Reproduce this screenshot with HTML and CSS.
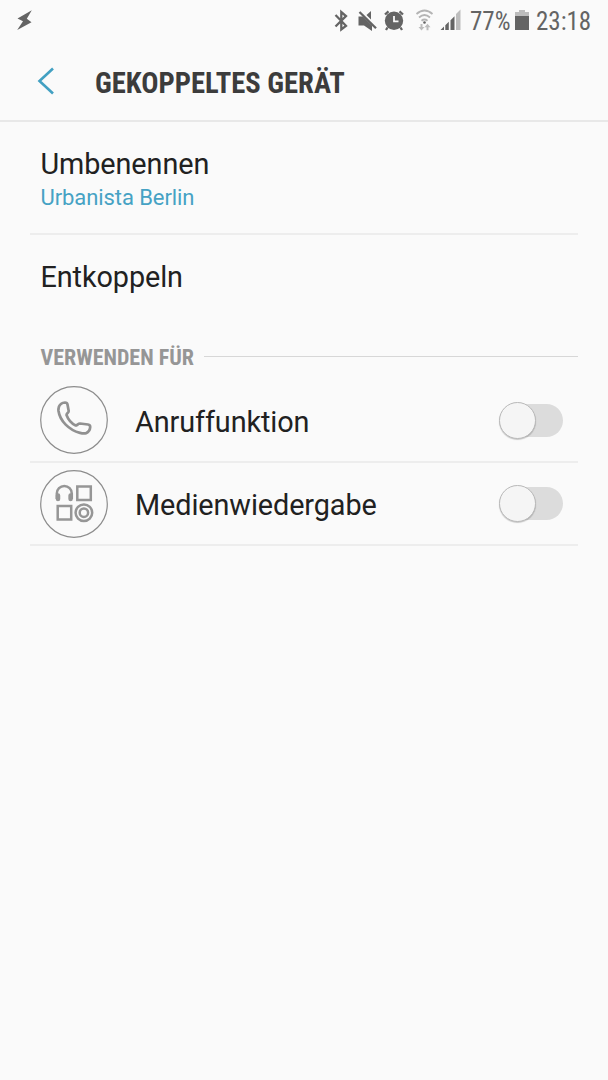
FILE: index.html
```html
<!DOCTYPE html>
<html lang="de">
<head>
    <meta charset="UTF-8">
    <meta name="viewport" content="width=device-width, initial-scale=1.0">
    <title>Gekoppeltes Gerät</title>
    <link rel="stylesheet" href="styles.css">
</head>
<body>
    <div class="status-bar">
        <svg class="icon-flash" width="18" height="20" viewBox="0 0 18 20">
            <path d="M15.800 .2 1.500 8.500l5.500 2.800L1.200 20l14.300-7.700-4.700-3.500z"/>
        </svg>
        <div class="status-icons">
            <svg width="135" height="42" viewBox="-.5 -.5 135 42">
                <!-- bluetooth -->
                <path class="line" d="M3 14.500 13.500 25.300 8.800 29V11.500L13.500 15.500 3 26"/>
                <!-- mute -->
                <path d="M26 16h4.500l9 9v5.500L31.500 25H26zM34 14.500 38.500 10.500V19z"/>
                <path class="line" d="M27 11.500 43.500 27.800"/>
                <!-- alarm -->
                <circle cx="61.500" cy="20.300" r="9.200"/>
                <path class="line" d="M52.500 14 56 10.800M67 10.800l3.500 3.200M55 27l-1.500 2.500M68 27l1.500 2.500"/>
                <path class="hands" d="M61.500 15.500v5.300H66"/>
                <!-- wifi -->
                <path class="wifi" d="M84 13.500q8-7 16 0M86.500 17q5.500-5 11 0M89 20.200q3-2.500 6 0"/>
                <circle cx="92" cy="22" r="1.300"/>
                <path class="pale" d="M88 23.500v3h-2l3 3.500 3-3.500h-2v-3zM94 29.800v-3h-2l3-3.600 3 3.600h-2v3z"/>
                <!-- signal -->
                <path d="M108 29.500l3.500-3.500v3.500zM112.800 24.700l3.500-3.500v8.300h-3.500zM118 19.800l4-4v13.700h-4z"/>
                <path class="pale" d="M123.500 13.500l4.500-4.500v20.500h-4.500z"/>
            </svg>
            <span class="battery-level">77%</span>
            <svg class="icon-battery" width="14" height="20" viewBox="0 0 14 20">
                <path class="pale" d="M0 2h4V0h6v2h4v5H0z"/>
                <path d="M0 6h14v14H0z"/>
            </svg>
            <span class="clock">23:18</span>
        </div>
    </div>

    <header class="title-bar">
        <svg class="back" width="18" height="28" viewBox="0 0 18 28">
            <path d="M16 1.500 2.500 14 16 26.500"/>
        </svg>
        <h1>GEKOPPELTES GERÄT</h1>
    </header>

    <main class="settings">
        <div class="item item-rename">
            <div class="item-title">Umbenennen</div>
            <div class="item-sub">Urbanista Berlin</div>
        </div>
        <div class="item item-unpair">
            <div class="item-title">Entkoppeln</div>
        </div>

        <h2 class="section"><span>VERWENDEN FÜR</span></h2>

        <div class="profile">
            <svg class="profile-icon" width="68" height="68" viewBox="0 0 68 68">
                <circle class="ring" cx="34" cy="34" r="33.300"/>
                <path class="phone" d="M19 20.500c1-2.500 3.500-3.800 6-4 1.500 0 2.300.8 2.500 2l1.200 6.500c0 1.800-2.200 2.200-2.200 4 1.500 4 5 8.500 9.200 10.500 1.500 0 2.300-2 4.300-2l8 1c1.700.2 2.300 1.300 2.200 2.700-.2 3-2 5-4.200 6-2 .6-4 .2-6-.3C29 44 20 35 18.500 25c-.2-1.700 0-3 .5-4.500z"/>
            </svg>
            <div class="profile-name">Anruffunktion</div>
            <div class="switch"></div>
        </div>
        <div class="profile">
            <svg class="profile-icon" width="68" height="68" viewBox="0 0 68 68">
                <circle class="ring" cx="34" cy="34" r="33.300"/>
                <g class="media">
                    <path d="M16.800 29v-5.500a7.500 7.500 0 0 1 15 0V29"/>
                    <rect x="37.300" y="16.500" width="13.500" height="13.500"/>
                    <rect x="17.700" y="36" width="13.500" height="13.500"/>
                    <circle cx="43.900" cy="42.700" r="8.300"/>
                    <circle cx="43.900" cy="42.700" r="4.200"/>
                </g>
                <path class="pads" d="M18 25.500v3.500M30.600 25.500v3.500"/>
            </svg>
            <div class="profile-name">Medienwiedergabe</div>
            <div class="switch"></div>
        </div>
    </main>
</body>
</html>
```
FILE: styles.css
```css
* {
    box-sizing: border-box;
}
body {
    margin: 0;
    min-height: 1080px;
    background: #fafafa;
    color: #212121;
    font-family: Roboto, sans-serif;
}
svg {
    display: block;
    flex: none;
}
.status-bar {
    display: flex;
    justify-content: space-between;
    height: 42px;
    padding: 0 16px;
    color: #646464;
    fill: #646464;
    font-family: "Roboto Condensed", Roboto, sans-serif;
    font-stretch: 75%;
    font-size: 25px;
    line-height: 43px;
}
.icon-flash {
    margin-top: 10px;
}
.status-icons {
    display: flex;
}
.line {
    fill: none;
    stroke: #646464;
    stroke-width: 2.3;
}
.hands {
    fill: none;
    stroke: #fafafa;
    stroke-width: 1.8;
}
.wifi {
    fill: none;
    stroke: #b4b4b4;
    stroke-width: 1.8;
}
.pale {
    fill: #bdbdbd;
}
.battery-level {
    width: 40px;
    margin-left: 3px;
    white-space: nowrap;
}
.icon-battery {
    margin: 10px 7px 0 5px;
}
.clock {
    width: 56px;
    white-space: nowrap;
}
.title-bar {
    display: flex;
    align-items: center;
    height: 80px;
    padding-left: 37px;
    border-bottom: 2px solid #e8e8e8;
}
.back {
    fill: none;
    stroke: #42a0c2;
    stroke-width: 2.6;
}
h1 {
    margin: 3px 0 0 40px;
    color: #3c3c3c;
    font-family: "Roboto Condensed", Roboto, sans-serif;
    font-stretch: 75%;
    font-size: 28.6px;
    font-weight: bold;
    white-space: nowrap;
}
.settings {
    padding: 0 30px;
}
.item {
    padding: 0 10.5px;
}
.item-rename {
    height: 113px;
    padding-top: 24px;
    border-bottom: 2px solid #ededed;
}
.item-unpair {
    height: 108px;
    padding-top: 24px;
}
.item-title,
.profile-name {
    font-size: 28.8px;
    letter-spacing: -0.08px;
    line-height: 36px;
}
.item-sub {
    color: #46a2c4;
    font-size: 22px;
    letter-spacing: -0.08px;
    line-height: 32px;
}
.section {
    display: flex;
    align-items: center;
    height: 28px;
    margin: 0 0 8px;
    padding-left: 10.5px;
    color: #969696;
    font-family: "Roboto Condensed", Roboto, sans-serif;
    font-stretch: 75%;
    font-size: 22px;
    font-weight: bold;
}
.section::after {
    content: "";
    flex: 1;
    height: 1px;
    margin: -2px 0 0 10.5px;
    background: #d7d7d7;
}
.profile {
    display: flex;
    align-items: center;
    height: 83px;
    padding: 0 15.5px 0 10px;
    border-bottom: 2px solid #ededed;
}
.profile:first-of-type {
    height: 84px;
}
.profile-name {
    flex: 1;
    margin-left: 27px;
    padding-top: 3px;
}
.ring {
    fill: none;
    stroke: #8c8c8c;
    stroke-width: 1.2;
}
.phone {
    fill: none;
    stroke: #919191;
    stroke-width: 2.7;
}
.media {
    fill: none;
    stroke: #969696;
    stroke-width: 2.5;
}
.pads {
    stroke: #969696;
    stroke-width: 4.5;
    stroke-linecap: round;
}
.section + .profile {
    height: 84px;
}
.switch {
    width: 63px;
    height: 33px;
    border-radius: 17px;
    background: #dcdcdc;
}
.switch::before {
    content: "";
    display: block;
    box-sizing: border-box;
    width: 37px;
    height: 37px;
    margin: -2px 0 0 -1px;
    border: 1px solid #b9b9b9;
    border-radius: 50%;
    background: #f5f5f5;
    box-shadow: 0 1px 1px rgba(0, 0, 0, 0.2);
}
```
